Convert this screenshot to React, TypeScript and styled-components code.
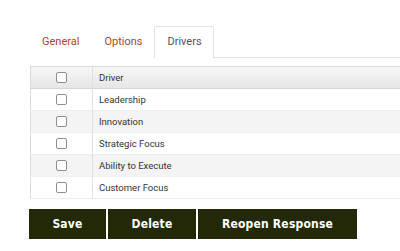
import styled, { createGlobalStyle } from 'styled-components';

const GlobalStyle = createGlobalStyle`
  html, body {
    margin: 0;
    padding: 0;
    background: #ffffff;
    overflow: hidden;
  }
  body {
    font-family: Roboto, "Liberation Sans", sans-serif;
  }
`;

const drivers = [
  'Leadership',
  'Innovation',
  'Strategic Focus',
  'Ability to Execute',
  'Customer Focus',
];

const tabs = ['General', 'Options', 'Drivers'];

const App = () => {
  return (
    <Page>
      <GlobalStyle />
      <TabBar>
        {tabs.map((tab) => (
          <Tab key={tab} active={tab === 'Drivers'}>
            {tab}
          </Tab>
        ))}
      </TabBar>
      <TableWrapper>
        <Table>
          <thead>
            <HeaderRow>
              <CheckCell as="th">
                <Checkbox type="checkbox" />
              </CheckCell>
              <TextCell as="th">Driver</TextCell>
            </HeaderRow>
          </thead>
          <tbody>
            {drivers.map((driver, i) => (
              <BodyRow key={driver} striped={i % 2 === 1}>
                <CheckCell>
                  <Checkbox type="checkbox" />
                </CheckCell>
                <TextCell>{driver}</TextCell>
              </BodyRow>
            ))}
          </tbody>
        </Table>
      </TableWrapper>
      <ButtonsWrapper>
        <ActionButton width="77px">Save</ActionButton>
        <ActionButton width="88px">Delete</ActionButton>
        <ActionButton width="159px">Reopen Response</ActionButton>
      </ButtonsWrapper>
    </Page>
  );
};

const Page = styled.div`
  width: 400px;
  height: 251px;
  padding: 26px 0 0 29px;
  box-sizing: border-box;
  overflow: hidden;
`;

const TabBar = styled.div`
  display: flex;
  width: 420px;
  height: 32px;
  border-bottom: 1px solid #e3e3e3;
  box-sizing: border-box;
`;

const Tab = styled.div<{ active?: boolean }>`
  display: flex;
  align-items: center;
  padding: 0 11px 2px 12px;
  height: 32px;
  box-sizing: border-box;
  font-size: 11px;
  color: ${({ active }) => (active ? '#555555' : '#ad4529')};
  background: #ffffff;
  border: 1px solid ${({ active }) => (active ? '#e3e3e3' : 'transparent')};
  border-bottom: none;
  border-radius: 2px 2px 0 0;
`;

const TableWrapper = styled.div`
  margin-top: 8px;
  margin-left: 1px;
  width: 420px;
`;

const Table = styled.table`
  width: 100%;
  border-collapse: collapse;
  border: 1px solid #dadada;
  font-size: 9.5px;
  color: #333333;
`;

const HeaderRow = styled.tr`
  height: 22px;
  background: linear-gradient(#f6f6f6, #e6e6e6);
  border-bottom: 1px solid #d6d6d6;
`;

const BodyRow = styled.tr<{ striped?: boolean }>`
  height: 22px;
  background: ${({ striped }) => (striped ? '#f4f4f4' : '#ffffff')};
  border-bottom: 1px solid #efefef;
`;

const CheckCell = styled.td`
  width: 61px;
  padding: 0;
  text-align: center;
  vertical-align: middle;
  border-right: 1px solid #e0e0e0;
`;

const TextCell = styled.td`
  padding: 0 0 0 6px;
  text-align: left;
  font-weight: 400;
  vertical-align: middle;
`;

const Checkbox = styled.input`
  appearance: none;
  display: block;
  margin: 0 auto;
  width: 11px;
  height: 11px;
  border: 1px solid #8f8f8f;
  border-radius: 2px;
  background: #ffffff;
  box-sizing: border-box;
`;

const ButtonsWrapper = styled.div`
  display: flex;
  gap: 2px;
  margin-top: 10px;
`;

const ActionButton = styled.button<{ width: string }>`
  width: ${({ width }) => width};
  height: 30px;
  padding: 0;
  border: none;
  background: #232906;
  color: #ffffff;
  font-family: "DejaVu Sans Condensed", "DejaVu Sans", sans-serif;
  font-weight: 700;
  font-size: 12px;
  letter-spacing: 0.2px;
`;

export default App;
